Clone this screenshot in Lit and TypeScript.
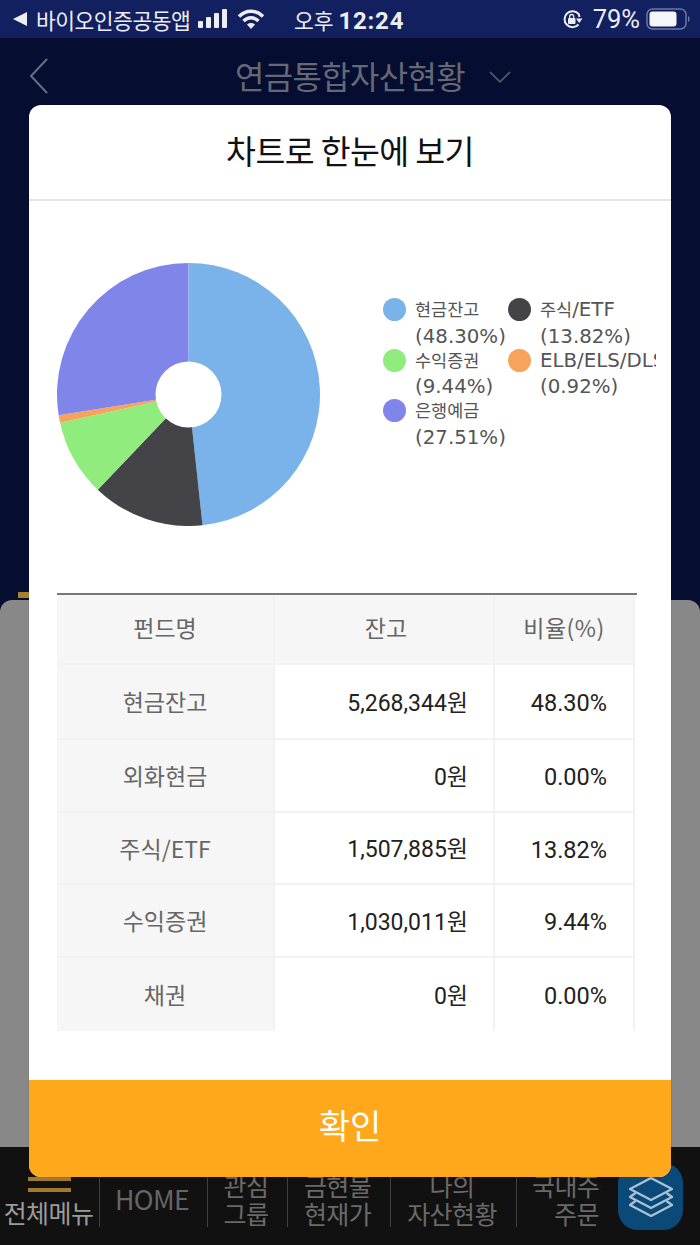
import { LitElement, css, html, svg } from "lit";
import { customElement } from "lit/decorators.js";

const slices = [
  { ko: "현금잔고", latin: "", pct: 48.3, color: "#7ab3ea" },
  { ko: "주식", latin: "/ETF", pct: 13.82, color: "#434348" },
  { ko: "수익증권", latin: "", pct: 9.44, color: "#90ed7d" },
  { ko: "", latin: "ELB/ELS/DLS", pct: 0.92, color: "#f7a35c" },
  { ko: "은행예금", latin: "", pct: 27.51, color: "#8085e9" },
];

const rows = [
  ["현금잔고", "5,268,344원", "48.30%"],
  ["외화현금", "0원", "0.00%"],
  ["주식/ETF", "1,507,885원", "13.82%"],
  ["수익증권", "1,030,011원", "9.44%"],
  ["채권", "0원", "0.00%"],
];

const navItems = [
  { lines: ["HOME"], width: 108, cls: "home" },
  { lines: ["관심", "그룹"], width: 80, cls: "" },
  { lines: ["금현물", "현재가"], width: 103, cls: "" },
  { lines: ["나의", "자산현황"], width: 126, cls: "" },
  { lines: ["국내주식", "주문"], width: 85, cls: "cut" },
];

function pieSlices() {
  const r = 131.5;
  let start = 0;
  return slices.map((s) => {
    const end = start + (s.pct / 100) * Math.PI * 2;
    const x1 = r * Math.sin(start);
    const y1 = -r * Math.cos(start);
    const x2 = r * Math.sin(end);
    const y2 = -r * Math.cos(end);
    const large = end - start > Math.PI ? 1 : 0;
    start = end;
    return svg`<path d="M0 0L${x1} ${y1}A${r} ${r} 0 ${large} 1 ${x2} ${y2}Z" fill=${s.color}></path>`;
  });
}

@customElement("app-root")
export class AppRoot extends LitElement {
  static styles = css`
    :host {
      display: block;
      position: relative;
      width: 700px;
      height: 1245px;
      overflow: hidden;
      background: #050d30;
      font-family: "Noto Sans CJK KR", "Noto Sans", sans-serif;
    }

    .page {
      display: flex;
      flex-direction: column;
      height: 100%;
    }

    .status {
      display: flex;
      align-items: center;
      height: 38px;
      padding: 0 10px 0 13px;
      background: #13205f;
      color: #eceef4;
      font-size: 21px;
      box-sizing: border-box;
    }
    .status .back-arrow {
      width: 0;
      height: 0;
      border-top: 7px solid transparent;
      border-bottom: 7px solid transparent;
      border-right: 14px solid #eceef4;
      margin-right: 9px;
    }
    .status .app {
      font-size: 21.5px;
      letter-spacing: -0.5px;
      width: 155px;
      white-space: nowrap;
    }
    .status .signal {
      margin-left: 7px;
    }
    .status .wifi {
      margin-left: 8px;
    }
    .status .time {
      margin-left: 29px;
      font-size: 21.5px;
      white-space: nowrap;
    }
    .status .time b {
      font-family: "Roboto", sans-serif;
      font-size: 24px;
      font-weight: 700;
      letter-spacing: 0.8px;
    }
    .status .right {
      display: flex;
      align-items: center;
      margin-left: auto;
    }
    .status .pct {
      font-family: "Roboto", sans-serif;
      font-size: 25.5px;
      margin: 0 6px 0 10px;
    }

    .header {
      display: flex;
      height: 67px;
      align-items: center;
      justify-content: center;
      position: relative;
      color: #656976;
      font-size: 32px;
      letter-spacing: -0.7px;
      padding-top: 7px;
      box-sizing: border-box;
    }
    .header .chev-left {
      position: absolute;
      left: 29px;
      top: 20px;
    }
    .header .chev-down {
      position: absolute;
      left: 488px;
      top: 32px;
    }

    .under {
      flex: 1;
      position: relative;
    }
    .gold {
      position: absolute;
      left: 18px;
      top: 487px;
      width: 30px;
      height: 6px;
      background: #a87f2a;
    }
    .sheet {
      position: absolute;
      inset: 495px 0 0 0;
      background: #888888;
      border-radius: 12px 12px 0 0;
    }

    .nav {
      display: flex;
      align-items: flex-start;
      height: 98px;
      background: #111111;
      color: #6a6a6a;
      font-size: 25px;
      line-height: 28px;
      letter-spacing: -0.6px;
      text-align: center;
      position: relative;
      box-sizing: border-box;
    }
    .nav .menu {
      width: 99px;
      flex: none;
      color: #9b9b9b;
      white-space: nowrap;
      display: flex;
      flex-direction: column;
      align-items: center;
      gap: 6px;
      padding: 41px 2px 0 0;
      box-sizing: border-box;
    }
    .nav .bars {
      width: 43px;
      height: 4px;
      margin-left: 2px;
      background: #a07a30;
      box-shadow: 0 -11px 0 #a07a30;
    }
    .nav .item {
      display: flex;
      flex-direction: column;
      justify-content: flex-end;
      height: 70px;
      margin-top: 10px;
      padding-right: 3px;
      flex: none;
      box-sizing: border-box;
      border-left: 1px solid #3f3f3f;
      white-space: nowrap;
      overflow: hidden;
    }
    .nav .item.home {
      justify-content: center;
      font-size: 26.7px;
      padding-top: 14px;
      color: #666666;
    }
    .nav .item.cut {
      align-items: flex-start;
      padding-right: 0;
    }
    .nav .item.cut span:first-child {
      margin-left: 15px;
    }
    .nav .item.cut span:last-child {
      margin-left: 37px;
    }
    .nav .stack {
      position: absolute;
      left: 618px;
      top: 16px;
      width: 65px;
      height: 67px;
      border-radius: 20px;
      background: #0b4a78;
      display: flex;
      align-items: center;
      justify-content: center;
    }

    .modal {
      position: absolute;
      left: 29px;
      top: 105px;
      width: 642px;
      height: 1072px;
      background: #ffffff;
      border-radius: 12px;
      overflow: hidden;
      display: flex;
      flex-direction: column;
      box-shadow: 0 0 1px rgba(0, 0, 0, 0.6);
    }
    .title {
      height: 88px;
      flex: none;
      display: flex;
      align-items: center;
      justify-content: center;
      padding-bottom: 6px;
      color: #111111;
      font-size: 32.5px;
      letter-spacing: -0.6px;
      border-bottom: 2px solid #e4e4e4;
    }
    .chart {
      display: flex;
      height: 392px;
      flex: none;
      padding: 0 14px 0 28px;
    }
    .chart svg {
      flex: none;
      margin-top: 62px;
    }
    .legend {
      display: grid;
      grid-template-columns: 125px 1fr;
      grid-auto-rows: 50.5px;
      margin: 96px 0 0 63px;
      width: 273px;
      overflow: hidden;
      align-content: start;
      font-family: "DejaVu Sans", "Noto Sans CJK KR", sans-serif;
      font-size: 19.8px;
      line-height: 25.5px;
      color: #555555;
    }
    .legend .entry {
      display: flex;
      gap: 9px;
      min-width: 0;
    }
    .legend .dot {
      flex: none;
      width: 23px;
      height: 23px;
      border-radius: 50%;
      margin-top: 1px;
    }
    .legend .label {
      white-space: nowrap;
    }
    .legend .ko {
      font-size: 17.5px;
    }

    .table-wrap {
      margin: 0 34px 0 28px;
      border-top: 2px solid #777777;
    }
    .table {
      display: grid;
      grid-template-columns: 218px 220px 140px;
      grid-template-rows: 70px 75px 73px 72px 73px 73px;
      width: 578px;
    }
    .cell {
      display: flex;
      align-items: center;
      box-sizing: border-box;
      border-right: 2px solid #f2f2f2;
      border-bottom: 2px solid #f2f2f2;
      font-size: 23px;
      color: #222222;
      font-family: "Roboto", "Noto Sans CJK KR", sans-serif;
      white-space: nowrap;
    }
    .cell.last {
      border-bottom: none;
    }
    .cell.head {
      justify-content: center;
      background: #f6f6f6;
      color: #666666;
      font-size: 23px;
      font-family: "Noto Sans CJK KR", sans-serif;
      padding-bottom: 1px;
    }
    .cell.head.top {
      padding-bottom: 5px;
    }
    .cell.head.mid {
      padding-left: 4px;
    }
    .cell.head.wide {
      letter-spacing: 0.5px;
    }
    .cell.amount {
      justify-content: flex-end;
      padding: 0 25px 2px 0;
    }
    .cell.ratio {
      justify-content: flex-end;
      padding: 3px 26px 0 0;
      font-size: 23.5px;
    }

    .ok {
      margin-top: auto;
      height: 97px;
      flex: none;
      display: flex;
      align-items: center;
      justify-content: center;
      padding-bottom: 8px;
      box-sizing: border-box;
      background: #ffa81c;
      color: #ffffff;
      font-size: 34px;
    }
  `;

  render() {
    return html`
      <div class="page">
        <div class="status">
          <span class="back-arrow"></span>
          <span class="app">바이오인증공동앱</span>
          <svg class="signal" width="31" height="20" viewBox="0 0 31 20" fill="#eceef4">
            <rect x="0" y="12" width="5" height="7" rx="1"></rect>
            <rect x="8" y="8" width="5" height="11" rx="1"></rect>
            <rect x="16" y="4" width="5" height="15" rx="1"></rect>
            <rect x="24" y="0" width="5" height="19" rx="1"></rect>
          </svg>
          <svg class="wifi" width="28" height="22" viewBox="0 0 28 22" fill="none" stroke="#eceef4" stroke-width="3.4">
            <path d="M2 8.5C9 1.5 19 1.5 26 8.5"></path>
            <path d="M6.5 13C11 8.6 17 8.6 21.5 13"></path>
            <path d="M14 21l-4-4.400c2.300-2 5.700-2 8 0z" fill="#eceef4" stroke="none"></path>
          </svg>
          <span class="time">오후 <b>12:24</b></span>
          <span class="right">
            <svg width="21" height="20" viewBox="0 0 21 20" fill="none" stroke="#eceef4" stroke-width="2">
              <path d="M16.500 15.500A8 8 0 1 1 16.800 5.200L17.500 8"></path>
              <path d="M20.500 9.500h-6.500l3.200 4.500z" fill="#eceef4" stroke="none"></path>
              <rect x="6" y="9" width="7.500" height="6" rx="1" fill="#eceef4" stroke="none"></rect>
              <path d="M7.700 9.500V7.500a2 2 0 0 1 4 0v2" stroke-width="1.300"></path>
            </svg>
            <span class="pct">79%</span>
            <svg width="44" height="22" viewBox="0 0 44 22" fill="none">
              <rect x="1" y="1" width="39" height="20" rx="5.500" stroke="#6a75a5" stroke-width="1.500"></rect>
              <rect x="3.500" y="3.500" width="27" height="15" rx="3" fill="#f4f5f8"></rect>
              <path d="M42 8v6c1-.5 1.600-1.500 1.600-3s-.6-2.500-1.600-3z" fill="#6a75a5"></path>
            </svg>
          </span>
        </div>
        <div class="header">
          <svg class="chev-left" width="20" height="36" viewBox="0 0 20 36" fill="none" stroke="#686d80" stroke-width="2">
            <path d="M18 1L2 18l16 17"></path>
          </svg>
          <span>연금통합자산현황</span>
          <svg class="chev-down" width="24" height="14" viewBox="0 0 24 14" fill="none" stroke="#4e5368" stroke-width="1.800">
            <path d="M2 2l10 10L22 2"></path>
          </svg>
        </div>
        <div class="under">
          <div class="gold"></div>
          <div class="sheet"></div>
        </div>
        <div class="nav">
          <div class="menu"><span class="bars"></span><span>전체메뉴</span></div>
          ${navItems.map(
            (n) => html`<div class="item ${n.cls}" style="width:${n.width}px">
              ${n.lines.map((l) => html`<span>${l}</span>`)}
            </div>`
          )}
          <div class="stack">
            <svg width="44" height="40" viewBox="0 0 44 40" fill="none" stroke="#a9c3d6" stroke-width="2.300" stroke-linejoin="round">
              <path d="M22 1L43 12 22 23 1 12z"></path>
              <path d="M6.500 16L1 20l21 11 21-11-5.500-4"></path>
              <path d="M6.500 24L1 28l21 11 21-11-5.500-4"></path>
            </svg>
          </div>
        </div>
      </div>

      <div class="modal">
        <div class="title">차트로 한눈에 보기</div>
        <div class="chart">
          <svg width="263" height="263" viewBox="-131.500 -131.500 263 263">
            ${pieSlices()}
            <circle r="33" fill="#ffffff"></circle>
          </svg>
          <div class="legend">
            ${slices.map(
              (s) => html`<div class="entry">
                <span class="dot" style="background:${s.color}"></span>
                <span class="label"><span class="ko">${s.ko}</span>${s.latin}<br />(${s.pct.toFixed(2)}%)</span>
              </div>`
            )}
          </div>
        </div>
        <div class="table-wrap">
          <div class="table">
            <div class="cell head top">펀드명</div>
            <div class="cell head top mid">잔고</div>
            <div class="cell head top wide">비율(%)</div>
            ${rows.map(
              (r, i) => {
                const last = i === rows.length - 1 ? "last" : "";
                return html`
                  <div class="cell head ${last}">${r[0]}</div>
                  <div class="cell amount ${last}">${r[1]}</div>
                  <div class="cell ratio ${last}">${r[2]}</div>
                `;
              }
            )}
          </div>
        </div>
        <div class="ok">확인</div>
      </div>
    `;
  }
}

declare global {
  interface HTMLElementTagNameMap {
    "app-root": AppRoot;
  }
}
